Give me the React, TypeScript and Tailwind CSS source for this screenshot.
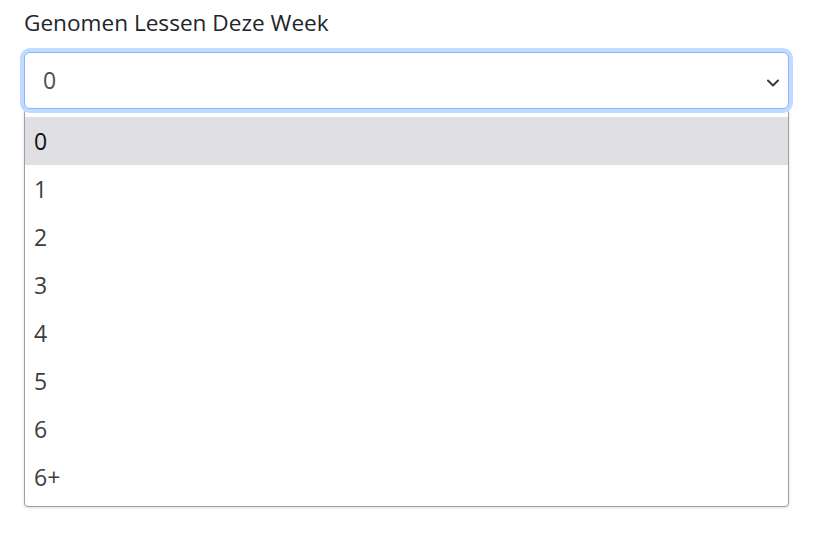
import React from 'react';

const options = ['0', '1', '2', '3', '4', '5', '6', '6+'];

const App = () => {
  return (
    <div
      className="min-h-[547px] bg-white px-[24px] pt-[5px]"
      style={{ fontFamily: '"Open Sans", "Noto Sans", sans-serif' }}
    >
      <div className="w-[765px]">
        <label className="block text-[22.6px] leading-[36px] text-[#212529] mb-[11px]">
          Genomen Lessen Deze Week
        </label>

        <div className="relative flex h-[57px] items-center rounded-[6px] border border-[#86b7fe] bg-white pl-[18px] shadow-[0_0_0_4px_#c1dbfe]">
          <span className="text-[23px] text-[#4a4f55]">0</span>
          <svg
            className="absolute right-[9px] top-[26px]"
            width="12"
            height="8"
            viewBox="0 0 12 8"
            fill="none"
          >
            <path d="M1 1.5 6 6.5 11 1.5" stroke="#343a40" strokeWidth="2" strokeLinecap="round" strokeLinejoin="round" />
          </svg>
        </div>

        <ul className="rounded-[4px] border border-[#a0a0a0] bg-white pt-[7px] pb-[5px] shadow-[0_1px_3px_rgba(0,0,0,0.15)]">
          {options.map((opt, i) => (
            <li
              key={opt}
              className={`flex h-[48px] items-center pl-[9px] text-[23px] ${
                i === 0 ? 'bg-[#e0dfe4] text-[#111]' : 'text-[#3d3d3d]'
              }`}
            >
              {opt}
            </li>
          ))}
        </ul>
      </div>
    </div>
  );
};

export default App;
